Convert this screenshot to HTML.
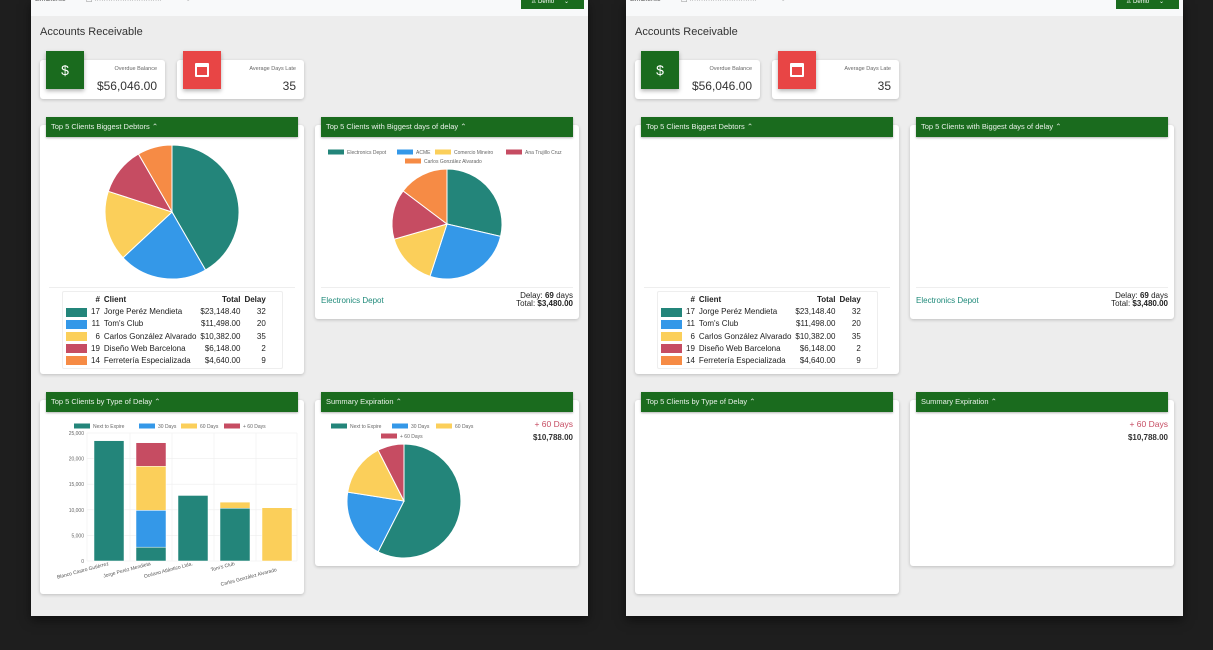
<!DOCTYPE html>
<html><head><meta charset="utf-8"><style>
*{margin:0;padding:0;box-sizing:border-box}
body{width:1213px;height:650px;background:#1e1e1e;font-family:"Liberation Sans",sans-serif;position:relative;overflow:hidden;color:#222}
.p{position:absolute;top:0;width:557px;height:616px;background:#ededed;box-shadow:0 4px 10px rgba(0,0,0,.5)}
.p *{position:absolute}
.p table *,.p b,.p br{position:static}
.nav{left:0;top:0;width:557px;height:16px;background:#f8f9fa}
.card{background:#fff;border-radius:3px;box-shadow:0 1px 3px rgba(0,0,0,.2)}
.hd{background:#1a6b1e;color:#e8f0e8;font-size:7.5px;line-height:20px;padding-left:5px;height:20px;box-shadow:0 1px 2px rgba(0,0,0,.3)}
.ic{box-shadow:0 2px 4px rgba(0,0,0,.3);color:#fff;text-align:center}
.lbl{font-size:5.5px;color:#666;right:8px;text-align:right;white-space:nowrap}
.val{font-size:12px;color:#333;right:8px;text-align:right;white-space:nowrap}
table{border-collapse:collapse;font-size:8px;color:#222}
td,th{padding:0 2px;line-height:12.2px;white-space:nowrap}
th{font-weight:bold}
.r{text-align:right}
.sw{display:inline-block;width:21px;height:9px;vertical-align:middle}
</style></head><body>
<div class="p" id="P1" style="left:31px"></div>
<div class="p" id="P2" style="left:626px"></div>
<template id="T">
<div class="nav"><span style="left:4px;top:-4px;font-size:7px;color:#555">Emiziente</span><span style="left:55px;top:-4px;font-size:7px;color:#777">☐ ·····························</span><span style="left:155px;top:-4px;font-size:7px;color:#777">○ ······</span><div style="left:490px;top:0;width:63px;height:9px;background:#1a6b1e;color:#fff;font-size:6px;line-height:4px;padding-left:10px">♙ Demo &nbsp;&nbsp;&nbsp;&nbsp;&nbsp;⌄</div></div>
<div style="left:9px;top:26px;font-size:11px;color:#333">Accounts Receivable</div>
<div class="card" style="left:9px;top:60px;width:125px;height:39px"><div class="lbl" style="top:6px">Overdue Balance</div><div class="val" style="top:19px">$56,046.00</div></div>
<div class="ic" style="left:15px;top:51px;width:38px;height:38px;background:#1a6b1e;font-size:14px;line-height:38px">$</div>
<div class="card" style="left:146px;top:60px;width:127px;height:39px"><div class="lbl" style="top:6px">Average Days Late</div><div class="val" style="top:19px">35</div></div>
<div class="ic" style="left:152px;top:51px;width:38px;height:38px;background:#e84545"><div style="left:12px;top:12px;width:14px;height:14px;border:2px solid #fff;border-top-width:4px;border-radius:1px"></div></div>
<div class="card" style="left:9px;top:125px;width:264px;height:249px"></div>
<div class="card" style="left:284px;top:125px;width:264px;height:194px"></div>
<div class="hd" style="left:15px;top:117px;width:252px">Top 5 Clients Biggest Debtors ⌃</div>
<div class="hd" style="left:290px;top:117px;width:252px">Top 5 Clients with Biggest days of delay ⌃</div>
<div style="left:18px;top:287px;width:246px;height:1px;background:#eee"></div>
<div style="left:290px;top:287px;width:252px;height:1px;background:#eee"></div>
<div style="left:31px;top:291px;width:221px;height:78px;border:1px solid #eee;border-radius:2px"><table style="left:1px;top:2px">
<tr><th></th><th class="r">#</th><th style="text-align:left">Client</th><th class="r">Total</th><th class="r">Delay</th></tr>
<tr><td><span class="sw" style="background:#23857a"></span></td><td class="r">17</td><td>Jorge Peréz Mendieta</td><td class="r">$23,148.40</td><td class="r">32</td></tr>
<tr><td><span class="sw" style="background:#3498e8"></span></td><td class="r">11</td><td>Tom's Club</td><td class="r">$11,498.00</td><td class="r">20</td></tr>
<tr><td><span class="sw" style="background:#fbcf5a"></span></td><td class="r">6</td><td>Carlos González Alvarado</td><td class="r">$10,382.00</td><td class="r">35</td></tr>
<tr><td><span class="sw" style="background:#c64c62"></span></td><td class="r">19</td><td>Diseño Web Barcelona</td><td class="r">$6,148.00</td><td class="r">2</td></tr>
<tr><td><span class="sw" style="background:#f68b45"></span></td><td class="r">14</td><td>Ferretería Especializada</td><td class="r">$4,640.00</td><td class="r">9</td></tr>
</table></div>
<div style="left:290px;top:296px;font-size:8px;color:#1f8a7a">Electronics Depot</div>
<div style="right:15px;top:292px;font-size:8px;line-height:8px;text-align:right;color:#222;white-space:nowrap">Delay: <b>69</b> days<br>Total: <b>$3,480.00</b></div>
<div class="card" style="left:9px;top:400px;width:264px;height:194px"></div>
<div class="card" style="left:284px;top:400px;width:264px;height:166px"></div>
<div class="hd" style="left:15px;top:392px;width:252px">Top 5 Clients by Type of Delay ⌃</div>
<div class="hd" style="left:290px;top:392px;width:252px">Summary Expiration ⌃</div>
<div style="right:15px;top:419px;font-size:8.5px;color:#c64c62">+ 60 Days</div>
<div style="right:15px;top:433px;font-size:8px;font-weight:bold;color:#333">$10,788.00</div>
</template>
<script>
const T=document.getElementById('T').innerHTML;
document.getElementById('P1').innerHTML=T;document.getElementById('P2').innerHTML=T;
const C={t:'#23857a',b:'#3498e8',y:'#fbcf5a',r:'#c64c62',o:'#f68b45'};
function pie(cx,cy,r,sl){let s='',a0=0;for(const [a1,c] of sl){const f=d=>[cx+r*Math.sin(d*Math.PI/180),cy-r*Math.cos(d*Math.PI/180)];const p=f(a0),q=f(a1);s+=`<path d="M${cx},${cy}L${p[0].toFixed(1)},${p[1].toFixed(1)}A${r},${r} 0 ${a1-a0>180?1:0} 1 ${q[0].toFixed(1)},${q[1].toFixed(1)}Z" fill="${c}" stroke="#fff" stroke-width="1"/>`;a0=a1;}return s;}
function leg(x,y,c,t){return `<rect x="${x}" y="${y-2.5}" width="16" height="5" fill="${c}"/><text x="${x+19}" y="${y+2}" font-size="5" fill="#666">${t}</text>`;}
let s='';
s+=pie(141,212,67,[[150,C.t],[227,C.b],[288,C.y],[330,C.r],[360,C.o]]);
s+=pie(416,224,55,[[103,C.t],[198,C.b],[254,C.y],[307,C.r],[360,C.o]]);
s+=pie(373,501,57,[[207,C.t],[279,C.b],[333,C.y],[360,C.r]]);
s+=leg(297,152,C.t,'Electronics Depot')+leg(366,152,C.b,'ACME')+leg(404,152,C.y,'Comercio Mineiro')+leg(475,152,C.r,'Ana Trujillo Cruz')+leg(374,161,C.o,'Carlos González Alvarado');
s+=leg(43,426,C.t,'Next to Expire')+leg(108,426,C.b,'30 Days')+leg(150,426,C.y,'60 Days')+leg(193,426,C.r,'+ 60 Days');
s+=leg(300,426,C.t,'Next to Expire')+leg(361,426,C.b,'30 Days')+leg(405,426,C.y,'60 Days')+leg(350,436,C.r,'+ 60 Days');
const y0=561,k=128/25000;
for(let i=0;i<=5;i++){const y=y0-i*5000*k;s+=`<line x1="56" x2="266" y1="${y}" y2="${y}" stroke="#eee" stroke-width=".6"/><text x="53" y="${y+2}" font-size="5" fill="#666" text-anchor="end">${i?(i*5).toString()+',000':'0'}</text>`;}
for(const x of [56,99,141,183,225,266])s+=`<line x1="${x}" x2="${x}" y1="433" y2="561" stroke="#eee" stroke-width=".6"/>`;
const bars=[[63,[[23500,C.t]]],[105,[[2700,C.t],[7200,C.b],[8600,C.y],[4600,C.r]]],[147,[[12800,C.t]]],[189,[[10300,C.t],[1200,C.y]]],[231,[[10400,C.y]]]];
for(const [x,st] of bars){let b=0;for(const [v,c] of st){const h=v*k;s+=`<rect x="${x}" y="${y0-(b+v)*k}" width="30" height="${h}" fill="${c}" stroke="#fff" stroke-width=".5"/>`;b+=v;}}
const lab=[['Blanco Castro Gutiérrez',78],['Jorge Peréz Mendieta',120],['Océano Atlántico Ltda.',162],["Tom's Club",204],['Carlos González Alvarado',246]];
lab.forEach(([t,x],i)=>{const y=i==4?571:565;s+=`<text x="${x}" y="${y}" font-size="5" fill="#555" text-anchor="end" transform="rotate(-15 ${x} ${y})">${t}</text>`;});
const svg=document.createElementNS('http://www.w3.org/2000/svg','svg');
svg.setAttribute('width','557');svg.setAttribute('height','616');svg.style.cssText='position:absolute;left:0;top:0';
svg.setAttribute('font-family','Liberation Sans, sans-serif');svg.innerHTML=s;
document.getElementById('P1').appendChild(svg);
</script>
</body></html>
